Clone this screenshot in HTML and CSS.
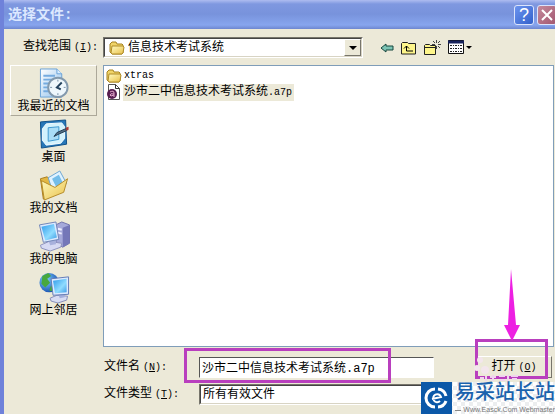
FILE: index.html
```html
<!DOCTYPE html>
<html lang="zh-CN">
<head>
    <meta charset="UTF-8">
    <meta name="viewport" content="width=device-width, initial-scale=1.0">
    <title>选择文件</title>
    <link rel="stylesheet" href="styles.css">
</head>
<body>

<svg class="defs" width="0" height="0" aria-hidden="true">
    <defs>
        <linearGradient id="screen" x1="0" y1="0" x2="1" y2="1">
            <stop offset="0" stop-color="#2f9bea"/>
            <stop offset="0.6" stop-color="#8fdcff"/>
            <stop offset="1" stop-color="#3d9be4"/>
        </linearGradient>
        <linearGradient id="paper" x1="0" y1="0" x2="1" y2="1">
            <stop offset="0" stop-color="#ffffff"/>
            <stop offset="1" stop-color="#8fc0ec"/>
        </linearGradient>
        <linearGradient id="folderFill" x1="0" y1="0" x2="1" y2="1">
            <stop offset="0" stop-color="#fffbc0"/>
            <stop offset="1" stop-color="#e9c04a"/>
        </linearGradient>
        <radialGradient id="globe" cx="0.35" cy="0.35" r="0.7">
            <stop offset="0" stop-color="#7fd0ff"/>
            <stop offset="1" stop-color="#1850b0"/>
        </radialGradient>
        <symbol id="folder" viewBox="0 0 16 14">
            <path d="M1 11V3l2-2h4l1 2h5l1 1v8l-1 1H3z" fill="#f0d468" stroke="#a58322"/>
            <path d="M2 12 3 5h11l1 1-1 6-1 1H3z" fill="url(#folderFill)" stroke="#b08c28"/>
        </symbol>
    </defs>
</svg>

<div class="dialog">
    <header class="titlebar">
        <h1>选择文件:</h1>
        <button class="title-btn help" aria-label="帮助">?</button>
        <button class="title-btn close" aria-label="关闭">
            <svg width="12" height="12" viewBox="0 0 12 12"><path d="M1 1l10 10M11 1L1 11" stroke="#fff" stroke-width="2"/></svg>
        </button>
    </header>

    <div class="toolbar">
        <label for="lookin">查找范围<span class="latin key">(<u>I</u>):</span></label>
        <div class="combo lookin">
            <svg class="combo-icon" width="16" height="14"><use href="#folder"/></svg>
            <select id="lookin">
                <option>信息技术考试系统</option>
            </select>
            <span class="combo-arrow"></span>
        </div>
        <div class="tools">
            <button aria-label="后退">
                <svg width="14" height="12" viewBox="0 0 14 12"><path d="M1 6l5-4v2h7v4H6v2z" fill="#7cc4b4" stroke="#17483f"/></svg>
            </button>
            <button aria-label="向上一级">
                <svg width="16" height="14" viewBox="0 0 16 14">
                    <path d="M.5 13V2.500l1-1h5l1 1h7V13z" fill="#fdf58a" stroke="#222"/>
                    <path d="M5.500 5v5H12M3 7.500 5.500 5 8 7.500" fill="none" stroke="#000"/>
                </svg>
            </button>
            <button aria-label="新建文件夹">
                <svg width="17" height="16" viewBox="0 0 17 16">
                    <path d="M.5 14.500v-9l1-1h4l1 1h5v9z" fill="#fdf58a" stroke="#222"/>
                    <path d="M.5 7.500h11" stroke="#222"/>
                    <path d="M12.500 0v3M12.500 6v3M8 4.500h3M14 4.500h3M9 1l2 2M14 6l2 2M16 1l-2 2" stroke="#444"/>
                </svg>
            </button>
            <button aria-label="查看">
                <svg width="24" height="15" viewBox="0 0 24 15">
                    <path d="M.5.500h15v13H.5z" fill="#fff" stroke="#111"/>
                    <path d="M0 2h16" stroke="#18235c" stroke-width="3"/>
                    <path d="M2 5.500h12M2 8.500h12M2 11.500h12" stroke="#222" stroke-dasharray="2 1 1 1"/>
                    <path d="M18 6h6l-3 3z" fill="#000"/>
                </svg>
            </button>
        </div>
    </div>

    <div class="main">
        <nav class="places">
            <a href="#recent" class="place active">
                <svg width="32" height="32" viewBox="0 0 32 32">
                    <path d="M2 1h17l5 5v24H2z" fill="url(#paper)" stroke="#6aa3d8"/>
                    <path d="M19 1v5h5" fill="#d9edff" stroke="#6aa3d8"/>
                    <path d="M5 8h12M5 12h9M5 16h6M5 20h5M5 24h6" stroke="#75abdf" stroke-width="2"/>
                    <circle cx="20" cy="20" r="10" fill="#eef7fc" stroke="#8299ad" stroke-width="2"/>
                    <path d="M20 12v2M20 26v2M12 20h2M26 20h2" stroke="#7890a5"/>
                    <path d="M24 15l-5 5 4 2" fill="none" stroke="#24435e" stroke-width="2"/>
                </svg>
                <span>我最近的文档</span>
            </a>
            <a href="#desktop" class="place">
                <svg width="32" height="32" viewBox="0 0 32 32">
                    <path d="M2 3l26-2 1 25-26 4z" fill="#2777b8" stroke="#104f87"/>
                    <path d="M8 5l16-1 3 4v12l-4 5-15 2-4-5V10z" fill="#d3f2fd" stroke="#f5fcff"/>
                    <path d="M10 9l11-1v13l-11 2z" fill="#a9ddf7" stroke="#3e98ce"/>
                    <path d="M16 18l3-4 9-4 1 2-9 4z" fill="#567086" stroke="#203b52"/>
                    <path d="M28 9l3-1v3l-2 1z" fill="#ad3934"/>
                </svg>
                <span>桌面</span>
            </a>
            <a href="#documents" class="place">
                <svg width="32" height="32" viewBox="0 0 32 32">
                    <path d="M2 9l7-2 3 3 12-3v14L5 30z" fill="#e3b843" stroke="#a87c1d"/>
                    <path d="M10 8l12-7 7 13-14 9z" fill="#dff2ff" stroke="#6ba5d2"/>
                    <path d="M14 9l7-4 4 8-7 4z" fill="#73bde9"/>
                    <path d="M3 11l14 7 13-9-4 14-20 8z" fill="url(#folderFill)" stroke="#b58a27"/>
                </svg>
                <span>我的文档</span>
            </a>
            <a href="#computer" class="place">
                <svg width="32" height="32" viewBox="0 0 32 32">
                    <path d="M18 4l6-3 8 3v19l-7 4-7-4z" fill="#a5a9da" stroke="#6f72aa"/>
                    <path d="M25 7l7-3v19l-7 4z" fill="#7477b8"/>
                    <path d="M20 8l4 1M20 12l4 1" stroke="#eeeeff" stroke-width="2"/>
                    <path d="M2 25l9-4 13 2-1 4-11 4-9-3z" fill="#d7daf3" stroke="#8c91bd"/>
                    <path d="M10 19l8-1v6l-6 1z" fill="#a8b1dc"/>
                    <path d="M1 4l17-3 3 18-16 3z" fill="#dceaff" stroke="#7185b8"/>
                    <path d="M3 6l13-3 3 14-12 3z" fill="url(#screen)"/>
                </svg>
                <span>我的电脑</span>
            </a>
            <a href="#network" class="place">
                <svg width="32" height="32" viewBox="0 0 32 32">
                    <circle cx="11" cy="11" r="10" fill="url(#globe)"/>
                    <path d="M4 4l6-3 3 3-4 3 3 4-5 5-4-4zM13 14l5 2-3 4-4-1z" fill="#48a83d"/>
                    <path d="M12 27l7-3 11 1-1 4-9 3-7-2z" fill="#d8dcf3" stroke="#858cba"/>
                    <path d="M20 22l7-1v5l-5 1z" fill="#a3afdc"/>
                    <path d="M13 7l18-2v18l-16 1z" fill="#dceaff" stroke="#637bb5"/>
                    <path d="M15 9l14-2v14l-12 1z" fill="url(#screen)"/>
                </svg>
                <span>网上邻居</span>
            </a>
        </nav>

        <ul class="files">
            <li>
                <svg width="16" height="14"><use href="#folder"/></svg>
                <span class="name latin">xtras</span>
            </li>
            <li>
                <svg width="16" height="16" viewBox="0 0 16 16">
                    <path d="M2.500.500h7l4 4v11h-11z" fill="#fff" stroke="#555"/>
                    <path d="M9.500.500v4h4" fill="none" stroke="#333"/>
                    <circle cx="6" cy="10" r="5" fill="#571e50"/>
                    <path d="M4 8q4-2 4 1v4M8 10q-4-1-4 1t4 0" fill="none" stroke="#e4a9cc"/>
                </svg>
                <span class="name selected">沙市二中信息技术考试系统<span class="latin">.a7p</span></span>
            </li>
        </ul>
    </div>

    <form class="fields">
        <div class="field">
            <label for="filename">文件名<span class="latin key">(<u>N</u>):</span></label>
            <div class="filename">
                <input type="text" id="filename" value="沙市二中信息技术考试系统.a7p">
                <div class="mark mark-name"></div>
            </div>
            <div class="open">
                <button type="button">打开<span class="latin key">(<u>O</u>)</span></button>
                <div class="mark mark-open"></div>
                <svg class="pointer" width="16" height="72" viewBox="0 0 16 72">
                    <path d="M7 0l5 56h4L8 72 0 56h4z" fill="#ed20e2"/>
                </svg>
                <svg class="smudge" width="48" height="26" viewBox="0 0 48 26">
                    <g fill="#f3e6ec">
                        <circle cx="6" cy="4" r="3"/>
                        <circle cx="3" cy="12" r="3"/>
                        <circle cx="11" cy="14" r="4"/>
                    </g>
                    <path d="M6 22h4M12 20v5M16 21h6M19 19v6M25 20h6M26 24h5M34 19v6M37 20h7M38 23h5" stroke="#f0d3ee" stroke-width="2"/>
                </svg>
            </div>
        </div>
        <div class="field">
            <label for="filetype">文件类型<span class="latin key">(<u>T</u>):</span></label>
            <div class="combo filetype">
                <select id="filetype">
                    <option>所有有效文件</option>
                </select>
            </div>
        </div>
    </form>

    <aside class="brand">
        <svg class="brand-logo" width="31" height="32" viewBox="0 0 31 32">
            <path d="M0 0h31v32H0z" fill="#0b58a8"/>
            <path d="M14 7a9 9 0 0 0 0 18M17 7a9 9 0 0 1 8 7M25 19a9 9 0 0 1-8 6" fill="none" stroke="#fff" stroke-width="3"/>
            <path d="M11 17l9-2a4 4 0 1 0-1 4" fill="none" stroke="#fff" stroke-width="2"/>
        </svg>
        <div class="brand-text">
            <strong>易采站长站</strong>
            <small>Www.Easck.Com Webmaster</small>
        </div>
    </aside>
</div>

</body>
</html>
```
FILE: styles.css
```css
* {
    box-sizing: border-box;
}
body {
    margin: 0;
    background-color: #ece9d8;
    color: #000;
    font-family: "Liberation Mono", "Noto Sans CJK SC", monospace;
    font-size: 12px;
    line-height: 16px;
}
button, input, select {
    font: inherit;
    color: inherit;
}
.defs {
    position: absolute;
}
.latin {
    font-size: 10px;
}
.key {
    padding-left: 3px;
}
.dialog {
    position: relative;
    min-height: 100vh;
    border-left: 4px solid #6f82da;
    overflow: hidden;
}

/* title bar */
.titlebar {
    display: flex;
    align-items: center;
    gap: 3px;
    height: 29px;
    margin-left: -4px;
    padding-left: 8px;
    background: linear-gradient(#aebcf0 0, #7f98e0 4px, #7893dc 14px, #87a5ee 25px, #6d86d0 100%);
}
.titlebar h1 {
    flex: 1;
    margin: 0;
    color: #dce8ff;
    font-size: 14px;
}
.title-btn {
    display: flex;
    align-items: center;
    justify-content: center;
    width: 20px;
    height: 20px;
    padding: 0;
    border: 1px solid #dbe4fc;
    border-radius: 3px;
    color: #fff;
}
.help {
    background: linear-gradient(135deg, #6c94ef, #3361cb);
    font-family: "Liberation Sans", sans-serif;
    font-size: 18px;
}
.close {
    margin-right: -2px;
    background: linear-gradient(135deg, #c58a9c, #a25770);
}

/* look-in row */
.toolbar {
    display: flex;
    align-items: center;
    padding: 8px 0 7px 19px;
}
.toolbar label {
    width: 80px;
}
.combo {
    position: relative;
    height: 21px;
    border: 1px solid;
    border-color: #77756b #fff #fff #77756b;
    background-color: #fff;
}
.combo select {
    display: block;
    width: 100%;
    height: 100%;
    padding: 0 2px;
    border: 1px solid;
    border-color: #444 #d8d4c4 #d8d4c4 #444;
    border-radius: 0;
    background: none;
    appearance: none;
}
.lookin {
    flex: 0 1 260px;
}
.combo.lookin select {
    padding-left: 23px;
}
.combo-icon {
    position: absolute;
    left: 5px;
    top: 3px;
}
.combo-arrow {
    position: absolute;
    top: 1px;
    right: 1px;
    bottom: 1px;
    width: 17px;
    border: 1px solid;
    border-color: #fff #77756b #77756b #fff;
    background-color: #ece9d8;
    pointer-events: none;
}
.combo-arrow::after {
    content: "";
    position: absolute;
    left: 4px;
    top: 6px;
    border: 4px solid transparent;
    border-top-color: #000;
    border-bottom: 0;
}
.tools {
    display: flex;
    align-items: center;
    gap: 7px;
    margin-left: 17px;
}
.tools button {
    display: flex;
    padding: 0;
    border: 0;
    background: none;
}

/* places and file list */
.main {
    display: flex;
    gap: 6px;
    padding: 0 1px 0 6px;
}
.places {
    width: 87px;
}
.place {
    display: flex;
    flex-direction: column;
    align-items: center;
    height: 51px;
    padding-top: 2px;
    border: 1px solid transparent;
    color: #000;
    text-decoration: none;
}
.place.active {
    border-color: #fff #aca899 #aca899 #fff;
}
.files {
    flex: 1;
    min-height: 282px;
    margin: 0;
    padding: 2px;
    border: 1px solid #7f9db9;
    background-color: #fff;
    list-style: none;
}
.files li {
    display: flex;
    align-items: center;
    gap: 1px;
    height: 16px;
}
.name {
    padding: 0 2px 0 1px;
}
.selected {
    background-color: #ece9d8;
}

/* file name and type */
.fields {
    display: flex;
    flex-direction: column;
    gap: 6px;
    padding: 9px 3px 9px 100px;
}
.field {
    display: flex;
    align-items: center;
}
.field label {
    width: 95px;
}
.filename {
    position: relative;
    flex: 0 1 235px;
}
.filename input {
    display: block;
    width: 100%;
    height: 21px;
    padding: 0 2px;
    border: 1px solid;
    border-color: #555 #fff #fff #555;
    background-color: #fff;
}
.filetype {
    flex: 0 1 235px;
}
.open {
    position: relative;
    width: 76px;
    margin-left: auto;
}
.open button {
    width: 100%;
    height: 22px;
    padding: 0;
    border: 1px solid;
    border-color: #fff #77756b #77756b #fff;
    background-color: #ece9d8;
}

/* markers drawn over the form */
.mark {
    position: absolute;
    border: 3px solid #b93fbe;
    pointer-events: none;
}
.mark-name {
    left: -15px;
    top: -9px;
    width: 207px;
    height: 35px;
}
.mark-open {
    left: -1px;
    top: -17px;
    width: 73px;
    height: 40px;
}
.pointer {
    position: absolute;
    left: 28px;
    bottom: 37px;
}
.smudge {
    position: absolute;
    left: -2px;
    top: 0;
    pointer-events: none;
}

/* site badge in the corner */
.brand {
    position: absolute;
    right: 0;
    bottom: 0;
    display: flex;
    background: repeating-conic-gradient(#eceeef 0 25%, #fff 0 50%) 0 0 / 8px 8px;
}
.brand-text {
    display: flex;
    flex-direction: column;
    width: 103px;
    padding-left: 3px;
    color: #1a62ad;
    white-space: nowrap;
}
.brand-text strong {
    font-size: 20px;
    font-weight: 500;
    line-height: 24px;
}
.brand-text small {
    display: flex;
    align-items: center;
    gap: 2px;
    color: #777;
    font-family: "Liberation Sans", sans-serif;
    font-size: 7px;
    line-height: 8px;
}
.brand-text small::before {
    content: "";
    flex: 1;
    height: 1px;
    background-color: #888;
}
```
